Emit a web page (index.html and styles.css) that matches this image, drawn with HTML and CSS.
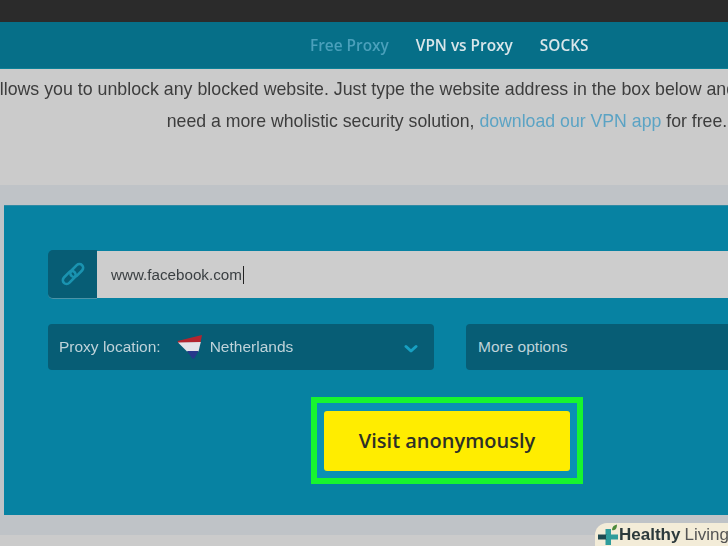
FILE: index.html
```html
<!DOCTYPE html>
<html lang="en">
<head>
<meta charset="utf-8">
<title>Free Proxy</title>
<link rel="stylesheet" href="styles.css">
</head>
<body>
<div class="page">
  <div class="topbar"></div>
  <nav class="nav">
    <a class="nav-link nav-active">Free Proxy</a>
    <a class="nav-link">VPN vs Proxy</a>
    <a class="nav-link">SOCKS</a>
  </nav>
  <section class="intro">
    <p class="intro-line intro-lead">Our free proxy allows you to unblock any blocked website. Just type the website address in the box below and click the button now to get browsing</p>
    <p class="intro-line">need a more wholistic security solution, <a class="intro-link">download our VPN app</a> for free.</p>
  </section>
  <main class="band">
    <form class="panel">
      <div class="url-row">
        <span class="url-icon">
          <svg width="28" height="28" viewBox="0 0 28 28" fill="none" stroke="#1a93b0" stroke-width="2.6">
            <rect x="14" y="3" width="7.500" height="15" rx="3.750" transform="rotate(45 17.750 10.500)"/>
            <rect x="6.500" y="10" width="7.500" height="15" rx="3.750" transform="rotate(45 10.250 17.500)"/>
          </svg>
        </span>
        <span class="url-input">www.facebook.com<span class="caret"></span></span>
      </div>
      <div class="options-row">
        <div class="select select-location">
          <span class="select-label">Proxy location:</span>
          <svg class="flag" width="26" height="26" viewBox="0 0 26 26">
            <path d="M0.500 7 L25 1 L23.500 8.500 L1.500 9 Z" fill="#b3252f"/>
            <path d="M1 8.500 L23.800 8 L21.500 17.500 L10 17.500 Z" fill="#e4e4ea"/>
            <path d="M10 17 L21.500 17 L17 25 L15 24 Z" fill="#27398c"/>
          </svg>
          <span class="select-value">Netherlands</span>
          <svg class="chevron" width="14" height="10" viewBox="0 0 14 10" fill="none" stroke="#17a0c2" stroke-width="3" stroke-linecap="round" stroke-linejoin="round">
            <path d="M2 2.500 L7 7 L12 2.500"/>
          </svg>
        </div>
        <div class="select select-more">
          <span class="select-label">More options</span>
        </div>
      </div>
      <div class="action-row">
        <div class="highlight">
          <button class="visit" type="button">Visit anonymously</button>
        </div>
      </div>
    </form>
  </main>
  <div class="footer"></div>
  <div class="badge">
    <svg class="badge-logo" width="22" height="22" viewBox="0 0 22 22">
      <path d="M8.500 5h5.500v16H8.500z" fill="#2f9d9c"/>
      <path d="M1 10.500h9v5H1z" fill="#1f4a50"/>
      <path d="M9 10.500h12v5H9z" fill="#2f9d9c"/>
      <path d="M15 6 C15 3 17 1 20 0.500 C20 4 18.500 7 15 6Z" fill="#4d8a3a"/>
    </svg>
    <span class="badge-strong">Healthy</span><span class="badge-light">Living</span>
  </div>
</div>
</body>
</html>
```

FILE: styles.css
```css
* { box-sizing: border-box; }
html, body { margin: 0; padding: 0; }
body { width: 728px; height: 546px; overflow: hidden; background: #cbcbcb; }
.page {
  position: relative;
  width: 728px;
  height: 546px;
  overflow: hidden;
  font-family: "Liberation Sans", Arial, sans-serif;
  filter: blur(0.4px);
}
.topbar { height: 22px; background: #2b2b2b; }
.nav {
  height: 47px;
  padding-left: 310px;
  display: flex;
  align-items: center;
  gap: 27px;
  background: #066f88;
  border-bottom: 1px solid #0d8197;
  font-family: "Open Sans", sans-serif;
  font-size: 15.400px;
  font-weight: 600;
}
.nav-link { color: #d9e6ea; }
.nav-active { color: #4aa0bb; }
.intro {
  height: 116px;
  width: 894px;
  padding-top: 4px;
  display: flex;
  flex-direction: column;
  align-items: center;
  font-size: 17.700px;
  line-height: 32px;
  color: #3d3d3d;
}
.intro-line { margin: 0; white-space: nowrap; }
.intro-lead { font-size: 17.800px; }
.intro-link { color: #5ba3c4; }
.band {
  height: 350px;
  padding: 20px 0 20px 4px;
  background: #bfc3c7;
}
.panel {
  height: 310px;
  padding-top: 44px;
  padding-left: 44px;
  background: #0782a2;
  border-top: 1px solid #2f8aa4;
}
.url-row { display: flex; height: 49px; }
.url-icon {
  width: 49px;
  flex: none;
  display: flex;
  align-items: center;
  justify-content: center;
  background: #075d75;
  border-radius: 5px 0 0 5px;
  border-bottom: 1px solid #4b93a7;
}
.url-input {
  flex: 1;
  margin: 1px 0;
  padding-left: 14px;
  display: flex;
  align-items: center;
  background: #cdcdcd;
  font-size: 15.200px;
  color: #3a3f42;
}
.caret { width: 1px; height: 18px; margin-left: 1px; background: #222; }
.options-row { display: flex; gap: 32px; margin-top: 25px; }
.select {
  height: 46px;
  display: flex;
  align-items: center;
  background: #075d75;
  border-radius: 4px;
  font-size: 15.500px;
  color: #bfd3da;
}
.select-location { width: 386px; flex: none; padding: 0 16px 0 11px; }
.select-more { flex: 1; padding-left: 12px; margin-right: -50px; }
.flag { margin-left: 16px; margin-right: 7px; flex: none; }
.chevron { margin-left: auto; margin-top: 3px; }
.action-row { display: flex; margin-top: 27px; margin-left: 263px; }
.highlight {
  width: 272px;
  height: 87px;
  padding: 8px 7px 7px 7px;
  border: 6px solid #17f52f;
  background: #0a90b4;
}
.visit {
  display: block;
  width: 100%;
  height: 60px;
  padding: 0 0 2px;
  border: 0;
  border-radius: 3px;
  background: #ffed00;
  font-family: "Open Sans", sans-serif;
  font-size: 20px;
  font-weight: 600;
  color: #2d3027;
}
.footer { height: 11px; }
.badge {
  position: absolute;
  left: 595px;
  top: 523px;
  width: 140px;
  height: 23px;
  display: flex;
  align-items: center;
  padding-left: 2px;
  background: #f3ecd8;
  border-radius: 12px 0 0 0;
  font-size: 17px;
  color: #2c3a3c;
}
.badge-logo { flex: none; }
.badge-strong { font-weight: 700; font-size: 17px; margin-left: 0; }
.badge-light { margin-left: 4px; color: #555; }
```
